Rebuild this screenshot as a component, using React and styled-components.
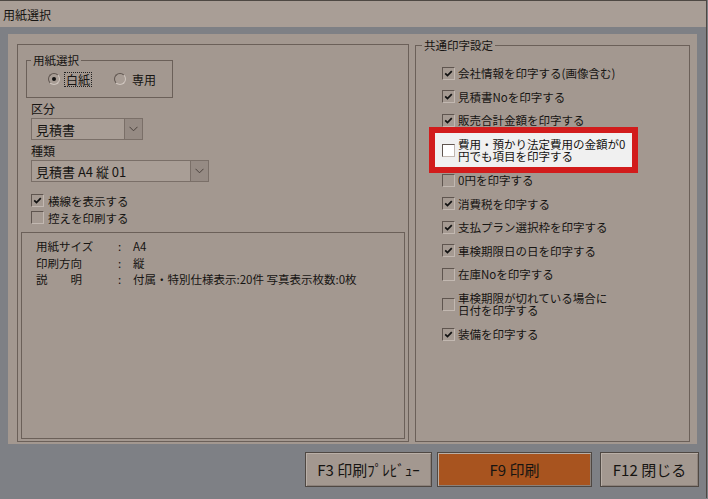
import styled, { createGlobalStyle } from "styled-components";

const GlobalStyle = createGlobalStyle`
  html, body {
    margin: 0;
    padding: 0;
    background: #7e8085;
  }
  body {
    font-family: "Noto Sans CJK JP", "Noto Sans", sans-serif;
  }
`;

const Window = styled.div`
  width: 707px;
  height: 498px;
  box-sizing: border-box;
  background: #7e8085;
  border-top: 1px solid #4e4843;
  border-right: 1px solid #4e4843;
  display: flex;
  flex-direction: column;
  font-family: "Noto Sans CJK JP", "Noto Sans", sans-serif;
  font-size: 11.5px;
  color: #161412;
`;

const TitleBar = styled.div`
  height: 26px;
  flex: none;
  display: flex;
  align-items: center;
  padding-left: 3px;
  background: #a99e96;
  font-size: 12px;
`;

const Body = styled.div`
  padding: 7px 9px 0 8px;
`;

const Panel = styled.div`
  height: 410px;
  box-sizing: border-box;
  background: #a39890;
  display: flex;
  align-items: flex-start;
  padding: 4px 0 0 9px;
`;

const LeftFrame = styled.div`
  width: 392px;
  height: 398px;
  margin-top: 6px;
  box-sizing: border-box;
  border: 1px solid #6b6059;
  display: flex;
  flex-direction: column;
`;

const TopSection = styled.div`
  padding: 8px 0 0 8px;
`;

const GroupBox = styled.fieldset`
  margin: 0;
  box-sizing: border-box;
  border: 1px solid #6b6059;
  width: ${({ $width }) => $width || "auto"};
  height: ${({ $height }) => $height || "auto"};
  padding: ${({ $padding }) => $padding || "0"};
  min-width: 0;
`;

const Legend = styled.legend`
  padding: 0 2px;
  line-height: 14px;
  font-size: 11.5px;
`;

const RadioRow = styled.div`
  display: flex;
  align-items: center;
  height: 16px;
  margin-left: 17px;
  gap: 22px;
`;

const RadioItem = styled.label`
  display: flex;
  align-items: center;
  gap: 4px;
`;

const RadioCircle = styled.span`
  width: 12px;
  height: 12px;
  box-sizing: border-box;
  border-radius: 50%;
  border: 1px solid;
  border-color: #5f554f #cfc6bf #cfc6bf #5f554f;
  background: #a89d95;
  display: flex;
  align-items: center;
  justify-content: center;
  &::after {
    content: "";
    width: 4px;
    height: 4px;
    border-radius: 50%;
    background: ${({ $on }) => ($on ? "#111" : "transparent")};
  }
`;

const RadioText = styled.span`
  padding: 0 1px;
  line-height: 13px;
  border: 1px ${({ $focus }) => ($focus ? "dotted #222" : "solid transparent")};
  font-size: 12px;
`;

const Fields = styled.div`
  padding-left: 5px;
`;

const FieldLabel = styled.div`
  margin-top: 4px;
  line-height: 14px;
  font-size: 12px;
`;

const Select = styled.div`
  margin-top: 2px;
  width: ${({ $width }) => $width};
  height: 22px;
  box-sizing: border-box;
  border: 1px solid #7a6f68;
  background: #a99e96;
  display: flex;
  align-items: stretch;
`;

const SelectText = styled.div`
  flex: 1;
  display: flex;
  align-items: center;
  padding-left: 4px;
  font-size: 13px;
`;

const SelectButton = styled.div`
  width: 17px;
  border-left: 1px solid #7a6f68;
  background: #968b84;
  display: flex;
  align-items: center;
  justify-content: center;
`;

const CheckList = styled.div`
  margin-top: 10px;
  display: flex;
  flex-direction: column;
`;

const CheckRow = styled.label`
  display: flex;
  align-items: center;
  gap: ${({ $gap }) => $gap || "4px"};
  height: ${({ $h }) => $h || "17px"};
  white-space: pre-line;
  line-height: 12px;
`;

const Box = styled.span`
  flex: none;
  width: 13px;
  height: 13px;
  box-sizing: border-box;
  border: 1px solid;
  border-color: #5f554f #c2b8b1 #c2b8b1 #5f554f;
  background: ${({ $light }) => ($light ? "#ffffff" : "#a59a92")};
  display: flex;
  align-items: center;
  justify-content: center;
`;

const InfoBox = styled.div`
  flex: 1;
  margin: 6px 3px 2px 3px;
  border: 1px solid #6b6059;
  padding: 5px 0 0 14px;
  display: grid;
  grid-template-columns: 82px 15px auto;
  grid-auto-rows: 16.5px;
  align-content: start;
  align-items: center;
`;

const RightGroup = styled(GroupBox)`
  margin-left: 6px;
`;

const OptionList = styled.div`
  display: flex;
  flex-direction: column;
  gap: 7.5px;
  margin-left: 20px;
`;

const Highlight = styled.div`
  width: 209px;
  box-sizing: border-box;
  margin: -8.5px 0 -8.5px -13px;
  padding: 2.5px 0 2.5px 7px;
  border: 6px solid #d21c1c;
  background: #f0f0f0;
`;

const Footer = styled.div`
  flex: 1;
  display: flex;
  justify-content: flex-end;
  align-items: flex-start;
  padding: 8px 7px 0 0;
`;

const Button = styled.button`
  width: ${({ $width }) => $width};
  height: 35px;
  margin-left: ${({ $ml }) => $ml || "0"};
  box-sizing: border-box;
  border: 1px solid #4f4843;
  box-shadow: inset 1px 1px 0 #b9afa7, inset -1px -1px 0 #8c817a;
  background: ${({ $primary }) => ($primary ? "#a8541f" : "#a39890")};
  color: #161412;
  font-family: "Noto Sans CJK JP", "Noto Sans", sans-serif;
  font-size: 15px;
  padding: 0;
`;

const CheckMark = () => (
  <svg width="9" height="9" viewBox="0 0 9 9">
    <path d="M1.2 4.3 L3.5 6.6 L7.8 2.1" fill="none" stroke="#111" strokeWidth="1.7" />
  </svg>
);

const Chevron = () => (
  <svg width="9" height="6" viewBox="0 0 9 6">
    <polyline points="0.5,0.8 4.5,4.8 8.5,0.8" fill="none" stroke="#4a423d" strokeWidth="1" />
  </svg>
);

const Check = ({ checked, light, h, gap, children }) => (
  <CheckRow $h={h} $gap={gap}>
    <Box $light={light}>{checked && <CheckMark />}</Box>
    <span>{children}</span>
  </CheckRow>
);

const options = [
  { text: "会社情報を印字する(画像含む)", checked: true },
  { text: "見積書Noを印字する", checked: true },
  { text: "販売合計金額を印字する", checked: true },
  { text: "費用・預かり法定費用の金額が0\n円でも項目を印字する", checked: false, highlight: true },
  { text: "0円を印字する", checked: false },
  { text: "消費税を印字する", checked: true },
  { text: "支払プラン選択枠を印字する", checked: true },
  { text: "車検期限日の日を印字する", checked: true },
  { text: "在庫Noを印字する", checked: false },
  { text: "車検期限が切れている場合に\n日付を印字する", checked: false },
  { text: "装備を印字する", checked: true },
];

const info = [
  ["用紙サイズ", "A4"],
  ["印刷方向", "縦"],
  ["説　　明", "付属・特別仕様表示:20件 写真表示枚数:0枚"],
];

export default function App() {
  return (
    <>
      <GlobalStyle />
      <Window>
        <TitleBar>用紙選択</TitleBar>
        <Body>
          <Panel>
            <LeftFrame>
              <TopSection>
                <GroupBox $width="147px" $padding="4px 0 10px 4px">
                  <Legend>用紙選択</Legend>
                  <RadioRow>
                    <RadioItem>
                      <RadioCircle $on />
                      <RadioText $focus>白紙</RadioText>
                    </RadioItem>
                    <RadioItem>
                      <RadioCircle />
                      <RadioText>専用</RadioText>
                    </RadioItem>
                  </RadioRow>
                </GroupBox>
                <Fields>
                  <FieldLabel>区分</FieldLabel>
                  <Select $width="112px">
                    <SelectText>見積書</SelectText>
                    <SelectButton>
                      <Chevron />
                    </SelectButton>
                  </Select>
                  <FieldLabel>種類</FieldLabel>
                  <Select $width="178px">
                    <SelectText>見積書 A4 縦 01</SelectText>
                    <SelectButton>
                      <Chevron />
                    </SelectButton>
                  </Select>
                  <CheckList>
                    <Check checked>横線を表示する</Check>
                    <Check>控えを印刷する</Check>
                  </CheckList>
                </Fields>
              </TopSection>
              <InfoBox>
                {info.map(([label, value]) => (
                  <>
                    <span key={label}>{label}</span>
                    <span>:</span>
                    <span>{value}</span>
                  </>
                ))}
              </InfoBox>
            </LeftFrame>
            <RightGroup $width="275px" $height="404px" $padding="13px 0 0 6px">
              <Legend>共通印字設定</Legend>
              <OptionList>
                {options.map((o) => {
                  const h = o.text.includes("\n") ? "29px" : "16px";
                  const row = (
                    <Check key={o.text} checked={o.checked} h={h} gap="3px" light={o.highlight}>
                      {o.text}
                    </Check>
                  );
                  return o.highlight ? <Highlight key={o.text}>{row}</Highlight> : row;
                })}
              </OptionList>
            </RightGroup>
          </Panel>
        </Body>
        <Footer>
          <Button $width="127px">F3 印刷ﾌﾟﾚﾋﾞｭｰ</Button>
          <Button $width="155px" $ml="5px" $primary>
            F9 印刷
          </Button>
          <Button $width="99px" $ml="8px">
            F12 閉じる
          </Button>
        </Footer>
      </Window>
    </>
  );
}
